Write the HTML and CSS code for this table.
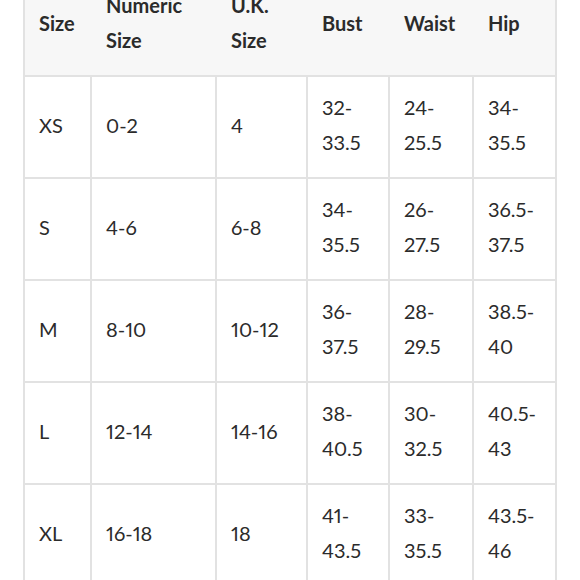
FILE: index.html
```html
<!DOCTYPE html>
<html lang="en">
<head>
<meta charset="utf-8">
<title>Size Chart</title>
<link rel="stylesheet" href="styles.css">
</head>
<body>
<table class="chart">
  <colgroup>
    <col class="c1"><col class="c2"><col class="c3"><col class="c4"><col class="c5"><col class="c6">
  </colgroup>
  <thead>
    <tr>
      <th>Size</th>
      <th>Numeric<br>Size</th>
      <th>U.K.<br>Size</th>
      <th>Bust</th>
      <th>Waist</th>
      <th>Hip</th>
    </tr>
  </thead>
  <tbody>
    <tr><td>XS</td><td>0-2</td><td>4</td><td>32-<br>33.5</td><td>24-<br>25.5</td><td>34-<br>35.5</td></tr>
    <tr><td>S</td><td>4-6</td><td>6-8</td><td>34-<br>35.5</td><td>26-<br>27.5</td><td>36.5-<br>37.5</td></tr>
    <tr><td>M</td><td>8-10</td><td>10-12</td><td>36-<br>37.5</td><td>28-<br>29.5</td><td>38.5-<br>40</td></tr>
    <tr><td>L</td><td>12-14</td><td>14-16</td><td>38-<br>40.5</td><td>30-<br>32.5</td><td>40.5-<br>43</td></tr>
    <tr><td>XL</td><td>16-18</td><td>18</td><td>41-<br>43.5</td><td>33-<br>35.5</td><td>43.5-<br>46</td></tr>
  </tbody>
</table>
</body>
</html>
```
FILE: styles.css
```css
html, body {
  margin: 0;
  padding: 0;
  background: #ffffff;
}
body {
  font-family: Lato, "Open Sans", sans-serif;
  color: #2b2b2b;
  overflow: hidden;
}
.chart {
  margin: -25px 0 0 23px;
  width: 534px;
  table-layout: fixed;
  border-collapse: separate;
  border-spacing: 0;
  border-left: 2px solid #e2e2e2;
  font-size: 20px;
  line-height: 35px;
  font-variant-numeric: proportional-nums;
}
.c1 { width: 67px; }
.c2 { width: 125px; }
.c3 { width: 91px; }
.c4 { width: 82px; }
.c5 { width: 84px; }
.c6 { width: 83px; }
.chart th,
.chart td {
  padding: 13px 10px 17px 14px;
  text-align: left;
  vertical-align: middle;
  border-bottom: 2px solid #e2e2e2;
  border-right: 2px solid #e2e2e2;
}
.chart th {
  background: #f7f7f7;
  font-weight: 700;
  color: #2b2b2b;
  border-right: none;
}
.chart th:last-child {
  border-right: 2px solid #e2e2e2;
}
.chart td {
  font-weight: 400;
}
```
